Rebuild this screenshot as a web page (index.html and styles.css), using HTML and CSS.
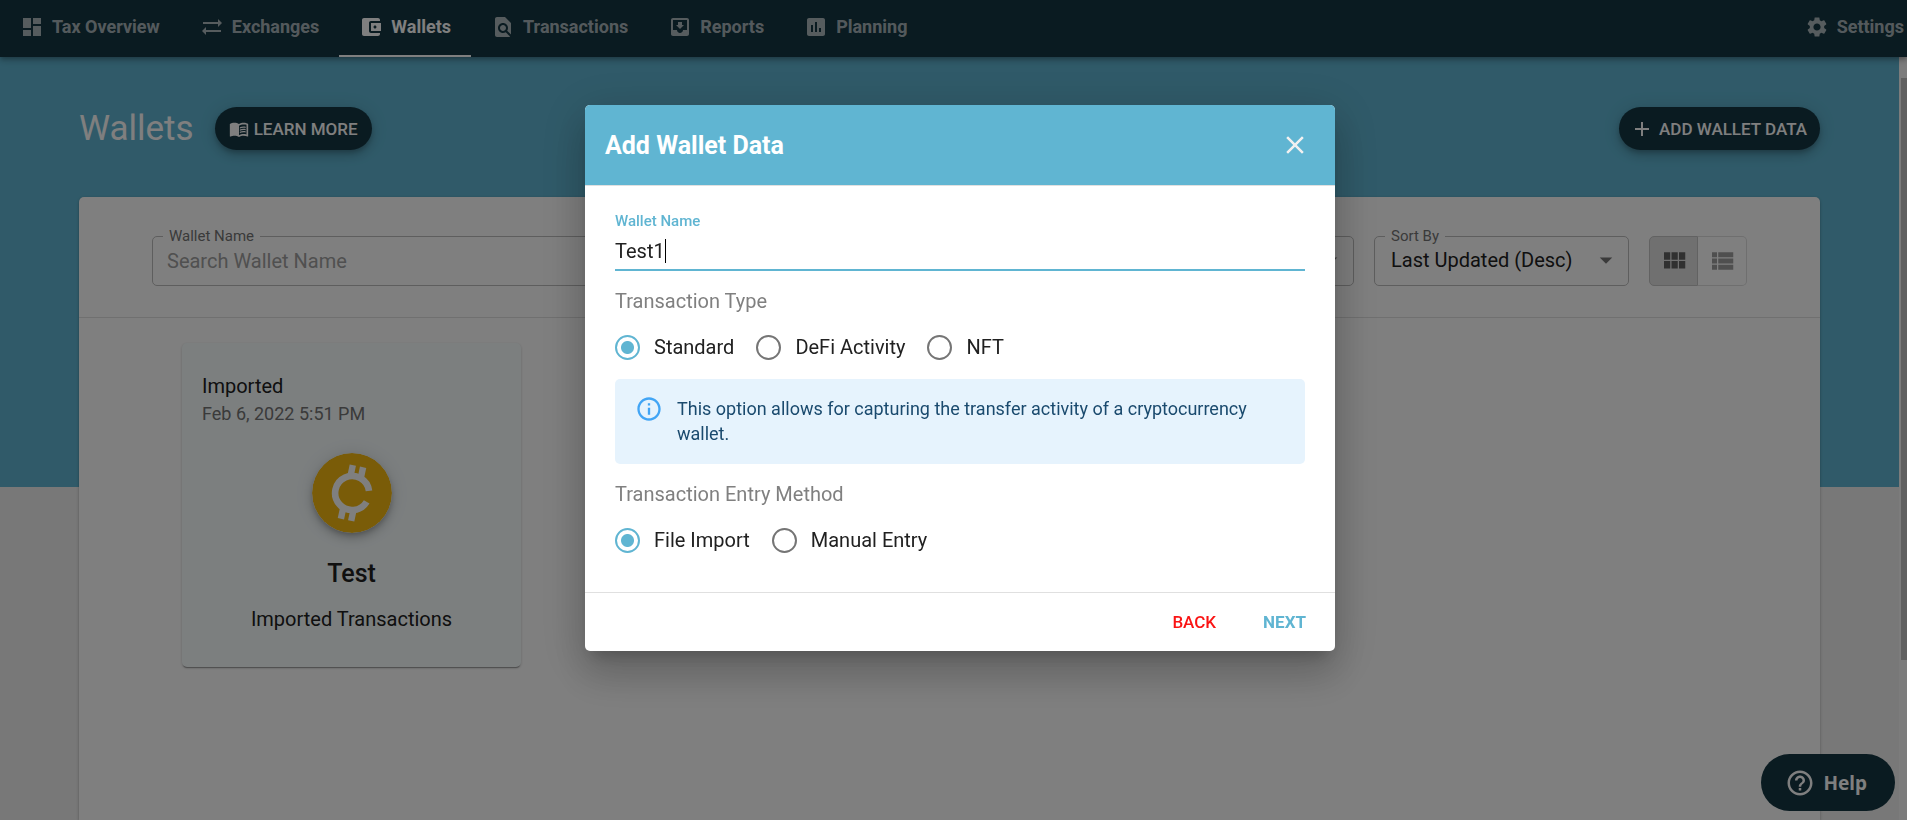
FILE: index.html
```html
<!DOCTYPE html>
<html lang="en">
<head>
<meta charset="utf-8">
<title>Wallets</title>
<link rel="stylesheet" href="styles.css">
</head>
<body>
<header class="topbar">
  <nav class="tabs" aria-label="Main">
    <a class="tab" href="#overview"><svg class="icon" viewBox="0 0 24 24"><path d="M3 13h8V3H3v10zm0 8h8v-6H3v6zm10 0h8V11h-8v10zm0-18v6h8V3h-8z"/></svg>Tax Overview</a>
    <a class="tab" href="#exchanges"><svg class="icon" viewBox="0 0 24 24"><path d="M22 8l-4-4v3H3v2h15v3l4-4zM2 16l4 4v-3h15v-2H6v-3l-4 4z"/></svg>Exchanges</a>
    <a class="tab tab-active" href="#wallets" aria-current="page"><svg class="icon" viewBox="0 0 24 24"><path d="M21 18v1c0 1.1-.9 2-2 2H5c-1.11 0-2-.9-2-2V5c0-1.1.89-2 2-2h14c1.1 0 2 .9 2 2v1h-9c-1.11 0-2 .9-2 2v8c0 1.1.89 2 2 2h9zm-9-2h10V8H12v8zm4-2.5c-.83 0-1.5-.67-1.5-1.5s.67-1.5 1.5-1.5 1.5.67 1.5 1.5-.67 1.5-1.5 1.5z"/></svg>Wallets</a>
    <a class="tab" href="#transactions"><svg class="icon" viewBox="0 0 24 24"><path d="M20 19.59V8l-6-6H6c-1.1 0-1.99.9-1.99 2L4 20c0 1.1.89 2 1.99 2H18c.45 0 .85-.15 1.19-.4l-4.43-4.43c-.8.52-1.74.83-2.76.83-2.76 0-5-2.24-5-5s2.24-5 5-5 5 2.24 5 5c0 1.02-.31 1.96-.83 2.75L20 19.59zM9 13c0 1.66 1.34 3 3 3s3-1.34 3-3-1.34-3-3-3-3 1.34-3 3z"/></svg>Transactions</a>
    <a class="tab" href="#reports"><svg class="icon" viewBox="0 0 24 24"><path d="M19 3H4.99c-1.11 0-1.98.9-1.98 2L3 19c0 1.1.88 2 1.99 2H19c1.1 0 2-.9 2-2V5c0-1.1-.9-2-2-2zm0 12h-4c0 1.66-1.35 3-3 3s-3-1.34-3-3H4.99V5H19v10zm-3-5h-2V7h-4v3H8l4 4 4-4z"/></svg>Reports</a>
    <a class="tab" href="#planning"><svg class="icon" viewBox="0 0 24 24"><path d="M19 3H5c-1.1 0-2 .9-2 2v14c0 1.1.9 2 2 2h14c1.1 0 2-.9 2-2V5c0-1.1-.9-2-2-2zM9 17H7v-7h2v7zm4 0h-2V7h2v10zm4 0h-2v-4h2v4z"/></svg>Planning</a>
    <a class="tab tab-end" href="#settings"><svg class="icon" viewBox="0 0 24 24"><path d="M19.14 12.94c.04-.3.06-.61.06-.94 0-.32-.02-.64-.07-.94l2.03-1.58c.18-.14.23-.41.12-.61l-1.92-3.32c-.12-.22-.37-.29-.59-.22l-2.39.96c-.5-.38-1.03-.7-1.62-.94l-.36-2.54c-.04-.24-.24-.41-.48-.41h-3.84c-.24 0-.43.17-.47.41l-.36 2.54c-.59.24-1.13.57-1.62.94l-2.39-.96c-.22-.08-.47 0-.59.22L2.74 8.87c-.12.21-.08.47.12.61l2.03 1.58c-.05.3-.09.63-.09.94s.02.64.07.94l-2.03 1.58c-.18.14-.23.41-.12.61l1.92 3.32c.12.22.37.29.59.22l2.39-.96c.5.38 1.03.7 1.62.94l.36 2.54c.05.24.24.41.48.41h3.84c.24 0 .44-.17.47-.41l.36-2.54c.59-.24 1.13-.56 1.62-.94l2.39.96c.22.08.47 0 .59-.22l1.92-3.32c.12-.22.07-.47-.12-.61l-2.01-1.58zM12 15.6c-1.98 0-3.6-1.62-3.6-3.6s1.62-3.6 3.6-3.6 3.6 1.62 3.6 3.6-1.62 3.6-3.6 3.6z"/></svg>Settings</a>
  </nav>
</header>

<div class="page">
  <main class="content">
    <div class="heading">
      <h1 class="title">Wallets</h1>
      <button class="pill pill-learn" type="button"><svg class="icon icon-book" viewBox="0 0 24 24"><path d="M21 5c-1.11-.35-2.33-.5-3.5-.5-1.95 0-4.05.4-5.5 1.5-1.45-1.1-3.55-1.5-5.5-1.5S2.45 4.9 1 6v14.65c0 .25.25.5.5.5.1 0 .15-.05.25-.05C3.1 20.45 5.05 20 6.5 20c1.95 0 4.05.4 5.5 1.5 1.35-.85 3.8-1.5 5.5-1.5 1.65 0 3.35.3 4.75 1.05.1.05.15.05.25.05.25 0 .5-.25.5-.5V6c-.6-.45-1.25-.75-2-1zm0 13.5c-1.1-.35-2.3-.5-3.5-.5-1.7 0-4.15.65-5.5 1.5V8c1.35-.85 3.8-1.5 5.5-1.5 1.2 0 2.4.15 3.5.5v11.5z"/><path d="M17.5 10.5c.88 0 1.73.09 2.5.26V9.24c-.79-.15-1.64-.24-2.5-.24-1.7 0-3.24.29-4.5.83v1.66c1.13-.64 2.7-.99 4.5-.99zM13 12.49v1.66c1.13-.64 2.7-.99 4.5-.99.88 0 1.73.09 2.5.26V11.9c-.79-.15-1.64-.24-2.5-.24-1.7 0-3.24.3-4.5.83zM17.5 14.33c-1.7 0-3.24.29-4.5.83v1.66c1.13-.64 2.7-.99 4.5-.99.88 0 1.73.09 2.5.26v-1.52c-.79-.16-1.64-.24-2.5-.24z"/></svg>LEARN MORE</button>
      <button class="pill pill-add" type="button"><svg class="icon" viewBox="0 0 24 24"><path d="M19 13h-6v6h-2v-6H5v-2h6V5h2v6h6v2z"/></svg>ADD WALLET DATA</button>
    </div>

    <section class="panel">
      <div class="filters">
        <div class="field field-search">
          <label class="field-label" for="search">Wallet Name</label>
          <input class="field-control" id="search" type="text" placeholder="Search Wallet Name">
        </div>
        <div class="field field-type">
          <label class="field-label" for="type">Type</label>
          <select class="field-control" id="type"><option>All</option></select>
          <svg class="field-arrow" viewBox="0 0 24 24"><path d="M7 10l5 5 5-5z"/></svg>
        </div>
        <div class="field field-sort">
          <label class="field-label" for="sort">Sort By</label>
          <select class="field-control" id="sort"><option>Last Updated (Desc)</option></select>
          <svg class="field-arrow" viewBox="0 0 24 24"><path d="M7 10l5 5 5-5z"/></svg>
        </div>
        <div class="toggle" role="group" aria-label="View">
          <button class="toggle-item toggle-on" type="button" aria-label="Grid view"><svg class="icon icon-lg" viewBox="0 0 24 24"><path d="M4 11h5V5H4v6zm0 7h5v-6H4v6zm6 0h5v-6h-5v6zm6 0h5v-6h-5v6zm-6-7h5V5h-5v6zm6-6v6h5V5h-5z"/></svg></button>
          <button class="toggle-item" type="button" aria-label="List view"><svg class="icon icon-lg" viewBox="0 0 24 24"><path d="M4 14h4v-4H4v4zm0 5h4v-4H4v4zM4 9h4V5H4v4zm5 5h12v-4H9v4zm0 5h12v-4H9v4zM9 5v4h12V5H9z"/></svg></button>
        </div>
      </div>
      <div class="cards">
        <article class="card">
          <p class="card-kind">Imported</p>
          <p class="card-date">Feb 6, 2022 5:51 PM</p>
          <svg class="coin" viewBox="-40 -40 80 80">
            <circle r="40" fill="#f4b911"/>
            <g fill="none" stroke="#fff" stroke-width="6.6" transform="rotate(12)">
              <path d="M16.2 -5.6A17 17 0 1 0 16.2 5.6"/>
              <path d="M-5 -27.5V-16M5.500 -27.5V-16M-5.500 27.5V16M5 27.5V16" stroke-width="6.4"/>
            </g>
          </svg>
          <h2 class="card-name">Test</h2>
          <p class="card-text">Imported Transactions</p>
        </article>
      </div>
    </section>
  </main>
  <div class="scroll" aria-hidden="true"><div class="scroll-up"></div><div class="scroll-thumb"></div></div>
</div>

<button class="help" type="button"><svg class="icon icon-lg" viewBox="0 0 24 24"><path d="M11 18h2v-2h-2v2zm1-16C6.48 2 2 6.48 2 12s4.48 10 10 10 10-4.48 10-10S17.52 2 12 2zm0 18c-4.41 0-8-3.59-8-8s3.59-8 8-8 8 3.59 8 8-3.59 8-8 8zm0-14c-2.21 0-4 1.79-4 4h2c0-1.1.9-2 2-2s2 .9 2 2c0 2-3 1.75-3 5h2c0-2.25 3-2.5 3-5 0-2.21-1.79-4-4-4z"/></svg>Help</button>

<div class="backdrop">
  <form class="dialog" role="dialog" aria-labelledby="dialog-title">
    <div class="dialog-head">
      <h2 class="dialog-title" id="dialog-title">Add Wallet Data</h2>
      <button class="close" type="button" aria-label="Close"><svg class="icon icon-lg" viewBox="0 0 24 24"><path d="M19 6.41L17.59 5 12 10.59 6.41 5 5 6.41 10.59 12 5 17.59 6.41 19 12 13.41 17.59 19 19 17.59 13.41 12z"/></svg></button>
    </div>
    <div class="dialog-body">
      <label class="name-label" for="name">Wallet Name</label>
      <div class="name-box"><input class="name-input" id="name" type="text" value="Test1"></div>

      <fieldset class="group">
        <legend class="group-title">Transaction Type</legend>
        <div class="options">
          <label class="option"><input class="radio" type="radio" name="kind" checked>Standard</label>
          <label class="option"><input class="radio" type="radio" name="kind">DeFi Activity</label>
          <label class="option"><input class="radio" type="radio" name="kind">NFT</label>
        </div>
      </fieldset>

      <div class="notice">
        <svg class="icon notice-icon" viewBox="0 0 24 24"><path d="M11 7h2v2h-2zm0 4h2v6h-2zm1-9C6.48 2 2 6.48 2 12s4.48 10 10 10 10-4.48 10-10S17.52 2 12 2zm0 18c-4.41 0-8-3.59-8-8s3.59-8 8-8 8 3.59 8 8-3.59 8-8 8z"/></svg>
        <p class="notice-text">This option allows for capturing the transfer activity of a cryptocurrency wallet.</p>
      </div>

      <fieldset class="group">
        <legend class="group-title">Transaction Entry Method</legend>
        <div class="options">
          <label class="option"><input class="radio" type="radio" name="method" checked>File Import</label>
          <label class="option"><input class="radio" type="radio" name="method">Manual Entry</label>
        </div>
      </fieldset>
    </div>
    <div class="dialog-foot">
      <button class="action action-back" type="button">BACK</button>
      <button class="action action-next" type="button">NEXT</button>
    </div>
  </form>
</div>
</body>
</html>
```
FILE: styles.css
```css
:root {
  --teal: #60b5d2;
  --navy: #143642;
  --ink: #212121;
}

* { box-sizing: border-box; }

body {
  margin: 0;
  height: 100vh;
  display: flex;
  flex-direction: column;
  overflow: hidden;
  font-family: Roboto, "Liberation Sans", sans-serif;
  font-size: 20px;
  color: var(--ink);
  background: #f0f0f0;
}

h1, h2, p { margin: 0; }

button, input, select { font-family: inherit; }

button { cursor: pointer; }

.icon {
  width: 24px;
  height: 24px;
  flex: none;
  fill: currentColor;
}

.icon-lg { width: 30px; height: 30px; }
.icon-book { width: 20px; height: 20px; }

/* Top navigation */
.topbar {
  flex: none;
  position: relative;
  z-index: 1;
  background: var(--navy);
  box-shadow: 0 2px 4px -1px rgba(0, 0, 0, .2), 0 4px 5px rgba(0, 0, 0, .14), 0 1px 10px rgba(0, 0, 0, .12);
}

.tabs { display: flex; }

.tab {
  height: 57px;
  padding: 0 20px 2px;
  display: flex;
  align-items: center;
  gap: 8px;
  border-bottom: 2px solid transparent;
  font-size: 18px;
  line-height: 20px;
  font-weight: 700;
  color: rgba(255, 255, 255, .65);
  text-decoration: none;
}

.tab-active { color: #fff; border-bottom-color: #fff; }
.tab-end { margin-left: auto; padding-right: 3px; }

/* Page */
.page {
  flex: 1;
  min-height: 0;
  display: flex;
}

.content {
  flex: 1;
  display: flex;
  flex-direction: column;
  padding: 0 79px;
  background: linear-gradient(var(--teal) 430px, #f0f0f0 430px);
}

.scroll { width: 8px; padding-left: 2px; background: #f8f8f8; }
.scroll-up { height: 21px; }
.scroll-thumb { height: 582px; background: #c1c1c1; }

.heading {
  height: 140px;
  padding-top: 3px;
  display: flex;
  align-items: center;
  gap: 21px;
}

.title { font-size: 35px; font-weight: 400; color: #fff; }

.pill {
  height: 43px;
  display: flex;
  align-items: center;
  border: 0;
  border-radius: 22px;
  font-size: 17px;
  font-weight: 500;
  color: #fff;
  background: var(--navy);
  box-shadow: 0 3px 5px -1px rgba(0, 0, 0, .2), 0 6px 10px rgba(0, 0, 0, .14), 0 1px 18px rgba(0, 0, 0, .12);
}

.pill-learn { padding: 0 14px; gap: 5px; }
.pill-add { margin-left: auto; padding: 0 13px 0 11px; gap: 5px; }

.panel {
  flex: 1;
  border-radius: 5px 5px 0 0;
  background: #fff;
  box-shadow: 0 1px 3px rgba(0, 0, 0, .3);
}

.filters {
  padding: 39px 73px 31px;
  display: flex;
  gap: 20px;
  border-bottom: 1px solid #e0e0e0;
}

.field { position: relative; height: 50px; }
.field-search { flex: 1; }
.field-type, .field-sort { width: 255px; }

.field-label {
  position: absolute;
  top: -9px;
  left: 11px;
  padding: 0 6px;
  font-size: 15px;
  line-height: 18px;
  color: #757575;
  background: #fff;
}

.field-control {
  width: 100%;
  height: 100%;
  padding: 0 14px;
  appearance: none;
  border: 1px solid #bdbdbd;
  border-radius: 5px;
  font-size: 20px;
  color: var(--ink);
  background: none;
}

select.field-control { padding: 0 16px 3px; }

.field-control::placeholder { color: #a0a0a0; opacity: 1; }

.field-arrow {
  position: absolute;
  top: 9px;
  right: 8px;
  width: 30px;
  height: 30px;
  fill: #757575;
  pointer-events: none;
}

.toggle { display: flex; }

.toggle-item {
  width: 49px;
  height: 50px;
  padding: 0;
  display: grid;
  place-items: center;
  border: 1px solid #dedede;
  border-radius: 0 5px 5px 0;
  color: #9e9e9e;
  background: none;
}

.toggle-on {
  border-color: #c4c4c4;
  border-radius: 5px 0 0 5px;
  color: #616161;
  background: #e0e0e0;
}

.toggle-item + .toggle-item { border-left: 0; }

.cards { padding: 25px 103px; display: flex; }

.card {
  width: 339px;
  padding: 29px 20px 34px;
  display: flex;
  flex-direction: column;
  border-radius: 5px;
  background: #f8feff;
  box-shadow: 0 2px 1px -1px rgba(0, 0, 0, .3), 0 1px 3px rgba(0, 0, 0, .2);
}

.card-kind { line-height: 28px; }
.card-date { font-size: 18px; line-height: 28px; color: #757575; }

.coin {
  width: 80px;
  height: 80px;
  margin: 25px auto 26px;
  border-radius: 50%;
  box-shadow: 0 3px 5px -1px rgba(0, 0, 0, .2), 0 6px 10px rgba(0, 0, 0, .14), 0 1px 18px rgba(0, 0, 0, .12);
}

.card-name { font-size: 25px; line-height: 30px; font-weight: 500; text-align: center; }
.card-text { margin-top: 16px; line-height: 28px; text-align: center; }

.help {
  position: fixed;
  right: 12px;
  bottom: 9px;
  height: 57px;
  padding: 0 28px 0 24px;
  display: flex;
  align-items: center;
  gap: 8px;
  border: 0;
  border-radius: 29px;
  font-family: "Noto Sans", sans-serif;
  font-size: 19px;
  font-weight: 700;
  color: #fff;
  background: var(--navy);
}

/* Dialog */
.backdrop {
  position: fixed;
  inset: 0;
  z-index: 2;
  padding: 105px 0 0 13px;
  display: flex;
  align-items: flex-start;
  justify-content: center;
  background: rgba(0, 0, 0, .5);
}

.dialog {
  width: 750px;
  overflow: hidden;
  border-radius: 5px;
  background: #fff;
  box-shadow: 0 11px 15px -7px rgba(0, 0, 0, .2), 0 24px 38px 3px rgba(0, 0, 0, .14), 0 9px 46px 8px rgba(0, 0, 0, .12);
}

.dialog-head {
  height: 80px;
  padding: 0 20px;
  display: flex;
  align-items: center;
  justify-content: space-between;
  color: #fff;
  background: var(--teal);
}

.dialog-title { font-size: 25px; font-weight: 700; }

.close {
  padding: 5px;
  display: grid;
  border: 0;
  color: #f0f0f0;
  background: none;
}

.dialog-body {
  padding: 26px 30px 20px;
  border-top: 1px solid #e0e0e0;
  border-bottom: 1px solid #e0e0e0;
}

.name-label {
  display: block;
  font-size: 15px;
  line-height: 18px;
  font-weight: 500;
  color: var(--teal);
}

.name-box {
  position: relative;
  height: 41px;
  border-bottom: 2px solid var(--teal);
}

.name-input {
  width: 100%;
  height: 100%;
  padding: 2px 0 0;
  border: 0;
  outline: 0;
  font-size: 20px;
  color: var(--ink);
  caret-color: transparent;
  background: none;
}

.name-box::after {
  content: "";
  position: absolute;
  top: 9px;
  left: 50px;
  width: 1px;
  height: 24px;
  background: #000;
}

.group { margin: 0; padding: 0; border: 0; }

.group-title {
  padding: 16px 0 0;
  line-height: 28px;
  color: #808080;
}

.options {
  height: 64px;
  display: flex;
  align-items: center;
  gap: 22px;
}

.option { display: flex; align-items: center; gap: 14px; }

.radio {
  width: 25px;
  height: 25px;
  margin: 0;
  appearance: none;
  border: 2px solid #757575;
  border-radius: 50%;
}

.radio:checked {
  border-color: var(--teal);
  background: radial-gradient(circle, var(--teal) 6px, transparent 7px);
}

.notice {
  padding: 16px 22px 18px 20px;
  display: flex;
  gap: 14px;
  border-radius: 5px;
  color: #1a4a6e;
  background: #e6f3fd;
}

.notice-icon { width: 28px; height: 28px; color: #42a5f5; }
.notice-text { padding-top: 1px; font-size: 18px; line-height: 25px; }

.dialog-foot {
  padding: 10px 9px;
  display: flex;
  justify-content: flex-end;
  gap: 7px;
}

.action {
  padding: 8px 20px;
  border: 0;
  font-size: 17px;
  line-height: 22px;
  font-weight: 500;
  background: none;
}

.action-back { color: #fa1414; }
.action-next { font-weight: 700; color: var(--teal); }
```
